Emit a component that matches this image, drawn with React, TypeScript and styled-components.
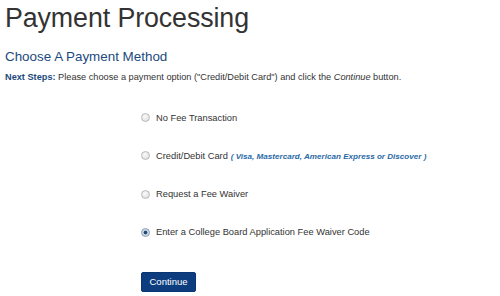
import React, { useState } from "react";
import styled, { createGlobalStyle } from "styled-components";

const Global = createGlobalStyle`
  html, body { margin: 0; padding: 0; background: #ffffff; }
  body { font-family: "Liberation Sans", Arial, sans-serif; color: #333333; }
`;

const Page = styled.div`
  display: flex;
  flex-direction: column;
  padding: 3px 0 0 5px;
  width: 500px;
  height: 296px;
  box-sizing: border-box;
  overflow: hidden;
`;

const Title = styled.h1`
  margin: 0;
  font-weight: normal;
  font-size: 26.8px;
  line-height: 30px;
  color: #333333;
  letter-spacing: -0.1px;
`;

const Subtitle = styled.h2`
  margin: 16px 0 0 0;
  font-weight: normal;
  font-size: 13.4px;
  line-height: 16px;
  color: #1c4a7d;
`;

const Steps = styled.p`
  margin: 7px 0 0 0;
  font-size: 9.2px;
  line-height: 11px;
  color: #333333;
  b { color: #1c4a7d; }
`;

const Options = styled.div`
  display: flex;
  flex-direction: column;
  gap: 27.3px;
  margin: 29px 0 0 135px;
`;

const Option = styled.label`
  display: flex;
  align-items: center;
  gap: 6px;
  height: 11px;
  font-size: 9.3px;
  color: #333333;
  cursor: pointer;
`;

const Radio = styled.input`
  appearance: none;
  margin: 0 0 0 1px;
  width: 9px;
  height: 9px;
  border-radius: 50%;
  border: 1px solid #b9b9b9;
  background: radial-gradient(circle at 40% 35%, #fafafa 0%, #e4e4e4 70%, #d4d4d4 100%);
  box-sizing: border-box;
  flex: none;
  &:checked {
    border-color: #8a9db5;
    background: radial-gradient(circle, #1d3f6a 0%, #2c5283 32%, #c7d3e2 45%, #dfe6ee 100%);
  }
`;

const Note = styled.span`
  font-size: 8.1px;
  font-weight: bold;
  font-style: italic;
  color: #2a6aa6;
  margin-left: 3px;
`;

const Button = styled.button`
  margin: 34px 0 0 136px;
  align-self: flex-start;
  width: 55px;
  height: 20px;
  padding: 0;
  border: 1px solid #0b3572;
  border-radius: 2px;
  background: #0d3d7f;
  color: #ffffff;
  font-family: "Liberation Sans", Arial, sans-serif;
  font-size: 9.5px;
  cursor: pointer;
`;

const options = [
  "No Fee Transaction",
  "Credit/Debit Card",
  "Request a Fee Waiver",
  "Enter a College Board Application Fee Waiver Code",
];

export default function App() {
  const [sel, setSel] = useState(3);
  return (
    <>
      <Global />
      <Page>
        <Title>Payment Processing</Title>
        <Subtitle>Choose A Payment Method</Subtitle>
        <Steps>
          <b>Next Steps:</b> Please choose a payment option ("Credit/Debit Card") and click the <i>Continue</i> button.
        </Steps>
        <Options>
          {options.map((o, i) => (
            <Option key={o}>
              <Radio type="radio" name="pm" checked={sel === i} onChange={() => setSel(i)} />
              <span>
                {o}
                {i === 1 && <Note>( Visa, Mastercard, American Express or Discover )</Note>}
              </span>
            </Option>
          ))}
        </Options>
        <Button>Continue</Button>
      </Page>
    </>
  );
}
